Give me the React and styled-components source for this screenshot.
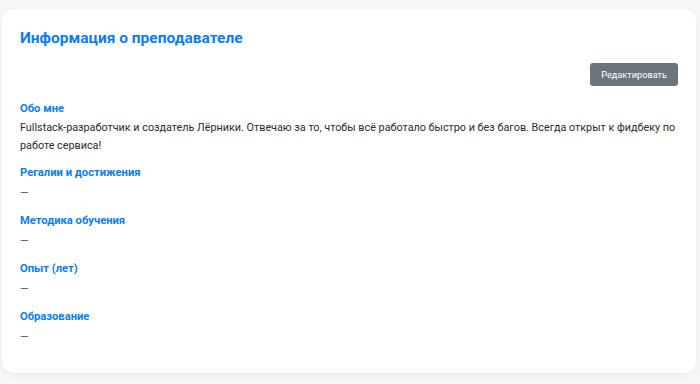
import React from 'react'
import styled, { createGlobalStyle } from 'styled-components'

const GlobalStyle = createGlobalStyle`
    body {
        margin: 0;
        background: #f7f7f7;
        font-family: Roboto, "Noto Sans", sans-serif;
    }
`

const Card = styled.div`
    margin: 9px 4px 11px 2px;
    padding: 18px 18px 15px 18px;
    background: #fff;
    border-radius: 12px;
    box-shadow: 0 2px 8px rgba(0, 0, 0, 0.05);
`

const Title = styled.h2`
    margin: 0 0 14px 0;
    font-size: 15.5px;
    line-height: 22px;
    font-weight: 700;
    color: #0a7cf7;
`

const Actions = styled.div`
    display: flex;
    justify-content: flex-end;
    margin-bottom: 16px;
`

const EditButton = styled.button`
    height: 23px;
    padding: 0 11px;
    border: none;
    border-radius: 3px;
    background: #6c757d;
    color: #fff;
    font-family: Roboto, sans-serif;
    font-size: 9.2px;
    cursor: pointer;
`

const Section = styled.div`
    margin-bottom: 11px;
`

const Heading = styled.h3`
    margin: 0 0 3px 0;
    font-size: 11.2px;
    line-height: 14px;
    font-weight: 700;
    color: #0a7cf7;
`

const Text = styled.p`
    margin: 0;
    padding: ${p => (p.$empty ? '1px 0 1px 0' : '0')};
    font-size: 10.8px;
    line-height: 18px;
    color: ${p => (p.$empty ? '#555' : '#2b2b2b')};
`

const sections = [
    {
        title: 'Обо мне',
        text: 'Fullstack-разработчик и создатель Лёрники. Отвечаю за то, чтобы всё работало быстро и без багов. Всегда открыт к фидбеку по работе сервиса!'
    },
    { title: 'Регалии и достижения', text: '' },
    { title: 'Методика обучения', text: '' },
    { title: 'Опыт (лет)', text: '' },
    { title: 'Образование', text: '' }
]

export default function App() {
    return (
        <>
            <GlobalStyle/>
            <Card>
                <Title>Информация о преподавателе</Title>
                <Actions>
                    <EditButton>Редактировать</EditButton>
                </Actions>
                {sections.map(s => (
                    <Section key={s.title}>
                        <Heading>{s.title}</Heading>
                        <Text $empty={!s.text}>{s.text || '—'}</Text>
                    </Section>
                ))}
            </Card>
        </>
    )
}
